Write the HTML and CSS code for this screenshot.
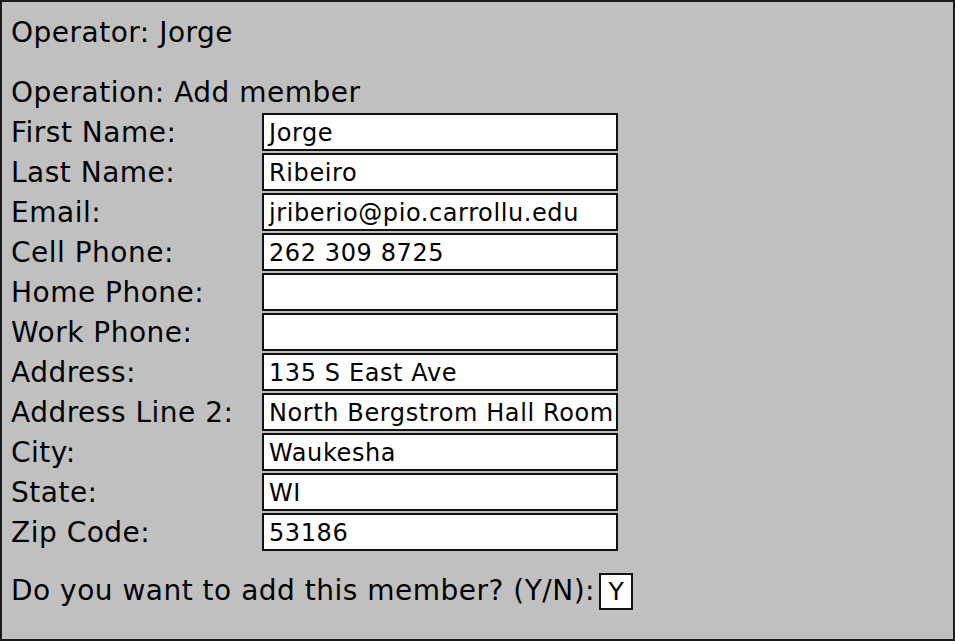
FILE: index.html
```html
<!DOCTYPE html>
<html>
<head>
<meta charset="utf-8">
<link rel="stylesheet" href="styles.css">
</head>
<body>
<div class="frame">
  <div class="line operator">Operator: Jorge</div>
  <div class="line operation">Operation: Add member</div>
  <div class="form">
    <div class="label">First Name:</div><div class="box">Jorge</div>
    <div class="label">Last Name:</div><div class="box">Ribeiro</div>
    <div class="label">Email:</div><div class="box">jriberio@pio.carrollu.edu</div>
    <div class="label">Cell Phone:</div><div class="box">262 309 8725</div>
    <div class="label">Home Phone:</div><div class="box"></div>
    <div class="label">Work Phone:</div><div class="box"></div>
    <div class="label">Address:</div><div class="box">135 S East Ave</div>
    <div class="label">Address Line 2:</div><div class="box">North Bergstrom Hall Room</div>
    <div class="label">City:</div><div class="box">Waukesha</div>
    <div class="label">State:</div><div class="box">WI</div>
    <div class="label">Zip Code:</div><div class="box">53186</div>
  </div>
  <div class="question">
    <span class="qtext">Do you want to add this member? (Y/N):</span>
    <span class="yn">Y</span>
  </div>
</div>
</body>
</html>
```

FILE: styles.css
```css
html, body {
  margin: 0;
  padding: 0;
  background: #ffffff;
}
.frame {
  box-sizing: border-box;
  width: 955px;
  height: 641px;
  border: 2px solid #1a1a1a;
  background: #c0c0c0;
  padding: 11px 0 0 9px;
  font-family: "DejaVu Sans", sans-serif;
  color: #000;
  font-size: 28px;
  letter-spacing: 0.5px;
}
.line {
  height: 40px;
  line-height: 40px;
}
.operation {
  margin-top: 20px;
}
.form {
  margin-top: 0;
  display: grid;
  grid-template-columns: 251px 356px;
  grid-auto-rows: 38px;
  row-gap: 2px;
}
.label {
  line-height: 40px;
}
.box {
  box-sizing: border-box;
  background: #fff;
  border: 2px solid #111;
  font-size: 24px;
  letter-spacing: 0.6px;
  line-height: 36px;
  padding-left: 5px;
  white-space: nowrap;
  overflow: hidden;
}
.question {
  margin-top: 20px;
  display: flex;
  align-items: center;
}
.qtext {
  line-height: 40px;
}
.yn {
  box-sizing: border-box;
  margin-left: 4px;
  width: 34px;
  height: 37px;
  background: #fff;
  border: 2px solid #111;
  font-size: 25px;
  letter-spacing: 0;
  line-height: 33px;
  text-align: center;
}
```
